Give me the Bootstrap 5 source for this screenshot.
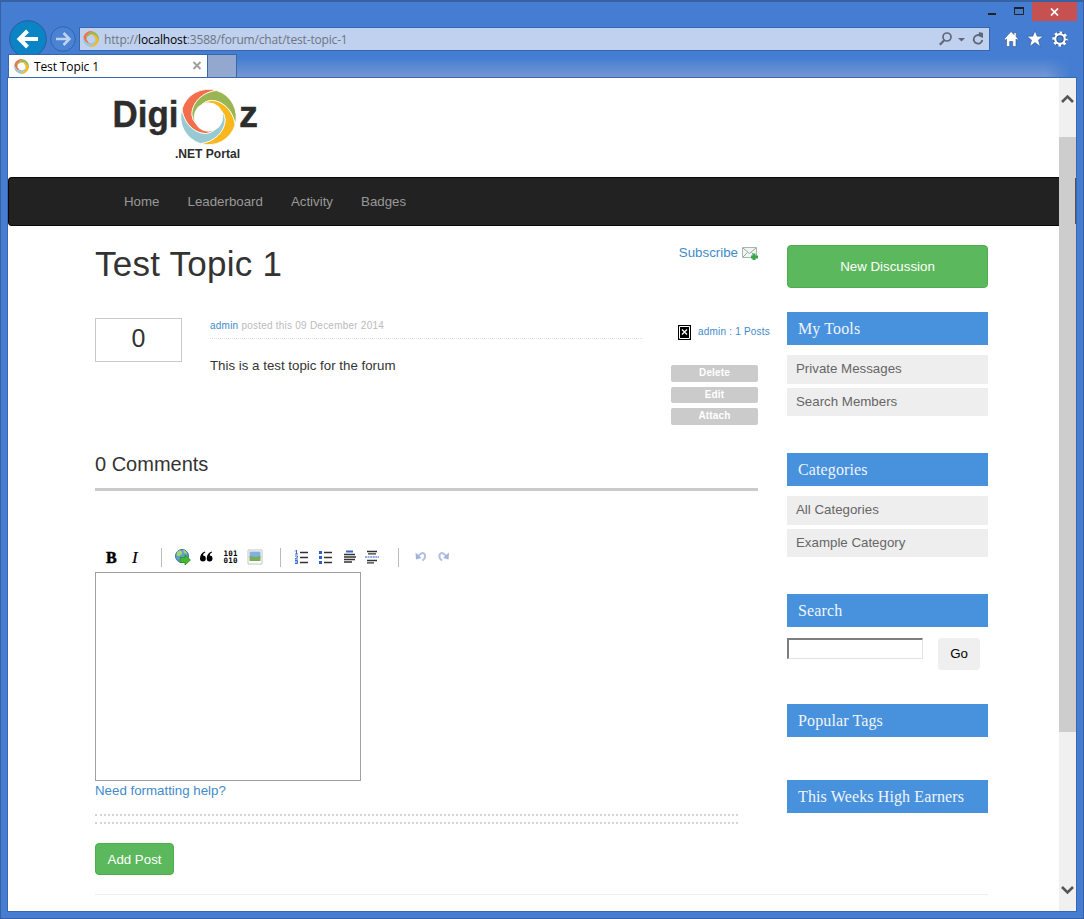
<!DOCTYPE html>
<html lang="en">
<head>
<meta charset="utf-8">
<title>Test Topic 1</title>
<meta name="viewport" content="width=device-width, initial-scale=1">
<link href="https://cdn.jsdelivr.net/npm/bootstrap@5.3.0/dist/css/bootstrap.min.css" rel="stylesheet">
<style>
  html, body { height: 100%; overflow: hidden; }
  body { font-family: "Liberation Sans", Arial, sans-serif; font-size: 13.3px; line-height: 20px; color: #333; }
  a { color: #428bca; text-decoration: none; }
  svg { display: block; flex: none; }
  .win { width: 1084px; height: 919px; background: #447dd1; border: 1px solid #3861a3; border-top-width: 2px; }
  .chrome { height: 75px; font-family: "Open Sans", "Noto Sans", sans-serif; color: #000; }
  .titlebar { height: 19px; padding-right: 6px; }
  .close-box { width: 45px; height: 19px; background: #c75050; margin-left: 1px; }
  .addr-row { height: 33px; padding: 2px 14px 0 8px; }
  .addr { width: 911px; height: 24px; background: #bfd1ee; border: 1px solid #3a66ad; font-size: 12px; color: #6d7683; }
  .addr .url { letter-spacing: -.17px; padding-top: 2px; }
  .addr b { font-weight: 400; color: #000; }
  .tab-row { height: 23px; position: relative; padding-left: 7px; z-index: 1; }
  .tab-row .haze { flex: 1; margin-right: 12px; background: linear-gradient(#447dd1 15%, #7597d3); -webkit-mask-image: linear-gradient(90deg, #000 97%, transparent); mask-image: linear-gradient(90deg, #000 97%, transparent); }
  .page-tab { width: 200px; background: #fff; border: 1px solid #3a66ad; border-bottom: 0; font-size: 12px; }
  .page-tab span { padding-top: 2px; letter-spacing: -.12px; }
  .new-tab { width: 29px; background: #92a8cf; border: 1px solid #3a66ad; border-left: 0; border-bottom: 0; }
  .client { height: 835px; margin: 0 6px; border: 1px solid #3a66ad; background: #fff; }
  .view { width: 1051px; }
  .scroller { width: 17px; background: #f0f0f0; }
  .scroller .arrow { height: 59px; padding-top: 16px; }
  .scroller .thumb { height: 595px; background: #cdcdcd; padding-top: 41px; }
  .scroller .thumb i { display: block; width: 1px; height: 46px; margin-left: 16px; background: #555; }
  .brand { height: 99px; padding-left: 82px; }
  .main-nav { height: 49px; background: #222; border: 1px solid #080808; border-right: 0; border-radius: 4px 0 0 4px; padding: 0 0 0 101px; }
  .main-nav .navbar-nav .nav-link { padding: 0 14px; color: #999; font-size: 13.3px; }
  .wrap { width: 893px; margin-left: 87px; height: 668px; }
  .left { width: 663px; }
  .side { width: 201px; padding-top: 19px; }
  .topic-head { height: 92px; }
  h1 { font-size: 35px; font-weight: 400; line-height: 40px; margin: 18px 0 0; letter-spacing: .25px; }
  .subs { margin-top: 17px; }
  .post { height: 126px; }
  .votes { width: 87px; height: 44px; border: 1px solid #c8c8c8; font-size: 25px; line-height: 39px; margin-right: 28px; }
  .body-col { width: 433px; margin-right: 28px; }
  .meta { height: 21px; font-size: 10px; line-height: 15px; color: #bbb; border-bottom: 1px dotted #ddd; letter-spacing: .23px; }
  .says { margin-top: 17px; letter-spacing: 0; }
  .who { height: 28px; margin: 0 -14px 0 7px; font-size: 10px; letter-spacing: .2px; }
  .who a { margin-left: 7px; }
  .tiny { display: block; width: 87px; height: 16.5px; margin-bottom: 5px; padding: 0; border: 0; border-radius: 2px; background: #cbcbcb; color: #fff; font-size: 10px; font-weight: 700; line-height: 16px; letter-spacing: .15px; }
  .comments { height: 47px; border-bottom: 3px solid #cbcbcb; font-size: 20px; line-height: 40px; font-weight: 400; margin: 0; letter-spacing: 0; }
  .tools { height: 24px; margin-top: 54px; padding-left: 4px; }
  .tools .sep { width: 1px; height: 19px; background: #bbb; }
  .editor { display: block; width: 266px; height: 209px; border: 1px solid #a0a0a0; margin-top: 3px; resize: none; }
  .dots { width: 643px; height: 10px; margin-top: 13px; border: dotted #d5d5d5; border-width: 2px 0; }
  .btn-go { background: #5cb85c; border: 1px solid #4cae4c; color: #fff; border-radius: 4px; font-size: 13.3px; padding: 0; }
  .add { width: 79px; height: 32px; margin-top: 19px; line-height: 29px; }
  .disc { width: 201px; height: 43px; padding-top: 1px; }
  .side h2 { height: 33px; margin: 0 0 10px; padding-left: 11px; background: #4891dd; color: #f0f5fc; font: 400 16px/33px "Liberation Serif", "Times New Roman", serif; letter-spacing: .12px; }
  .side .pick { height: 28.5px; margin-bottom: 4px; padding-left: 9px; background: #eee; color: #666; line-height: 28px; }
  .find { width: 136px; height: 21px; border: 2px solid; border-color: #7d7d7d #e3e3e3 #e3e3e3 #7d7d7d; border-right-width: 1px; border-bottom-width: 1px; background: #fff; }
  .go { width: 42px; height: 32px; margin-left: 15px; background: #efefef; border: 0; border-radius: 4px; padding: 0; color: #000; font-size: 13.3px; }
  .foot { width: 893px; margin-left: 87px; border-top: 1px solid #eee; }
</style>
</head>
<body>
<svg width="0" height="0" class="position-absolute" aria-hidden="true">
  <defs>
    <path id="petal" d="M8-26.500A27.600 27.600 0 0 0-26.500-8C-25 6-14 17-2 16.500Q3 16 6 13A14.400 14.400 0 0 1-13 6Q-16 3-16.500-2C-17-14-6-25 8-26.500Z"/>
    <g id="swirl">
      <use href="#petal" fill="#f36e4b"/>
      <use href="#petal" fill="#9ab652" transform="rotate(90)"/>
      <use href="#petal" fill="#f8b71c" transform="rotate(180)"/>
      <use href="#petal" fill="#97cad2" transform="rotate(270)"/>
    </g>
  </defs>
</svg>
<div class="win">
  <header class="chrome">
    <div class="titlebar d-flex justify-content-end">
      <svg width="50" height="19" viewBox="0 0 50 19"><path d="M7 11h8v2H7z" fill="#222"/><path d="M33.500 6h9v6.500h-9z" fill="none" stroke="#222"/><path d="M33 5h10v2H33z" fill="#222"/></svg>
      <div class="close-box d-flex align-items-center justify-content-center">
        <svg width="9" height="8" viewBox="0 0 9 8"><path d="M1 .5l7 7M8 .5l-7 7" stroke="#fff" stroke-width="1.700"/></svg>
      </div>
    </div>
    <div class="addr-row d-flex align-items-center">
      <svg width="38" height="38" viewBox="0 0 38 38"><circle cx="19" cy="19" r="18.300" fill="#0a84c4" stroke="#2c5c9c"/><path d="M29 19H11M18.500 11l-8 8 8 8" fill="none" stroke="#fff" stroke-width="4"/></svg>
      <svg style="margin:0 3px" width="26" height="26" viewBox="0 0 26 26"><circle cx="13" cy="13" r="12.300" fill="#4a82d4" stroke="#3564aa"/><path d="M6 13h13M13.500 7l6 6-6 6" fill="none" stroke="#c0d3ee" stroke-width="2.500"/></svg>
      <div class="addr d-flex align-items-center flex-shrink-0">
        <svg style="margin:0 5px 0 3px" width="16" height="16" viewBox="-28 -28 56 56"><use href="#swirl"/></svg>
        <span class="url flex-grow-1">http://<b>localhost</b>:3588/forum/chat/test-topic-1</span>
        <svg width="50" height="20" viewBox="0 0 50 20" fill="none" stroke="#5f6878"><circle cx="8" cy="8" r="4" stroke-width="1.700"/><path d="M5 11.500L.8 15.700" stroke-width="2.200"/><path d="M19 9h7l-3.500 3.500z" fill="#5f6878" stroke="none"/><path d="M41 6.500A4.300 4.300 0 1 0 43.300 11" stroke-width="1.800"/><path d="M40 3l4 1v5l-4.500-2z" fill="#5f6878" stroke="none"/></svg>
      </div>
      <svg style="margin-left:14px" width="66" height="18" viewBox="0 0 66 18"><g fill="#fff" stroke="#31588f" stroke-width=".6"><path d="M7 1.500L.2 9l1 1.200L2.500 9v7.500h3.200v-5h3v5H12V9l1.200 1.200 1-1.200-2-2.200V2.500H10v2z"/><path d="M31 .7l2.200 5.500h6L34.500 10l1.800 6.500-5.300-3.900-5.300 3.900L27.500 10l-4.700-3.800h6z"/></g><g transform="translate(56 9)"><circle r="4.800" fill="none" stroke="#31588f" stroke-width="4.200"/><circle r="6.500" fill="none" stroke="#fff" stroke-width="2.200" stroke-dasharray="2.600 2.505" stroke-dashoffset="1.300"/><circle r="4.800" fill="none" stroke="#fff" stroke-width="2.200"/></g></svg>
    </div>
    <div class="tab-row d-flex">
      <div class="page-tab d-flex align-items-center">
        <svg style="margin:0 5px" width="15" height="15" viewBox="-28 -28 56 56"><use href="#swirl"/></svg>
        <span class="flex-grow-1">Test Topic 1</span>
        <svg class="me-1" width="11" height="10" viewBox="0 0 11 10"><path d="M1.500 1l7 7M8.500 1l-7 7" stroke="#a0a0a0" stroke-width="2"/></svg>
      </div>
      <div class="new-tab"></div>
      <div class="haze"></div>
    </div>
  </header>
  <div class="client d-flex">
    <div class="view">
      <div class="brand">
        <svg width="200" height="90" viewBox="0 0 200 90" fill="#2d2d2d" font-family="Liberation Sans, Arial, sans-serif" font-weight="700">
          <text x="22.500" y="49" font-size="36" textLength="66" lengthAdjust="spacingAndGlyphs" stroke="#2d2d2d" stroke-width=".4">Digi</text>
          <text x="149" y="49" font-size="36" textLength="19" lengthAdjust="spacingAndGlyphs" stroke="#2d2d2d" stroke-width=".4">z</text>
          <text x="85" y="80" font-size="12" textLength="65" lengthAdjust="spacingAndGlyphs">.NET Portal</text>
          <use href="#swirl" transform="translate(118.500 39)" stroke="#fff" stroke-width=".8"/>
        </svg>
      </div>
      <nav class="main-nav navbar navbar-expand">
        <div class="navbar-nav">
          <a class="nav-link" href="#">Home</a>
          <a class="nav-link" href="#">Leaderboard</a>
          <a class="nav-link" href="#">Activity</a>
          <a class="nav-link" href="#">Badges</a>
        </div>
      </nav>
      <main class="wrap d-flex justify-content-between">
        <section class="left">
          <div class="topic-head d-flex justify-content-between align-items-start">
            <h1>Test Topic 1</h1>
            <a class="subs d-flex align-items-center" href="#">Subscribe
              <svg class="ms-1" width="16" height="14" viewBox="0 0 16 14"><path d="M.5 1.500h14v10H.5z" fill="#f0f5f3" stroke="#a9b5b2"/><path d="M1 2l6.500 5.500L14 2M1 11l4.500-4.500M14 11L9.500 6.500" fill="none" stroke="#9aa8a4"/><path d="M10.500 7.500h3v2H16v3h-2.500V14h-3v-1.500H9v-3h1.500z" fill="#3aa54a"/></svg>
            </a>
          </div>
          <article class="post d-flex align-items-start">
            <div class="votes text-center">0</div>
            <div class="body-col">
              <div class="meta"><a href="#">admin</a> posted this 09 December 2014</div>
              <div class="says">This is a test topic for the forum</div>
            </div>
            <div>
              <div class="who d-flex align-items-center text-nowrap">
                <svg width="13" height="15" viewBox="0 0 13 15"><path fill="#000" d="M0 0h13v15H0z"/><path d="M1.500 1.500h10v12h-10z" fill="none" stroke="#fff"/><path d="M4 4.500l5 5M9 4.500l-5 5" stroke="#fff" stroke-width="1.300"/></svg>
                <a href="#">admin : 1 Posts</a>
              </div>
              <div style="height:19px"></div>
              <button class="tiny">Delete</button>
              <button class="tiny">Edit</button>
              <button class="tiny">Attach</button>
            </div>
          </article>
          <h3 class="comments">0 Comments</h3>
          <div class="tools d-flex align-items-center">
            <svg width="24" height="20" viewBox="0 0 24 20"><text x="7" y="15.500" font-family="Liberation Serif, serif" font-weight="700" font-size="16" stroke="#000" stroke-width=".5">B</text></svg>
            <svg width="24" height="20" viewBox="0 0 24 20"><text x="9" y="15.500" font-family="Liberation Serif, serif" font-style="italic" font-size="17" stroke="#000" stroke-width=".2">I</text></svg>
            <span class="sep" style="margin:0 9px 0 14px"></span>
            <svg width="24" height="20" viewBox="0 0 24 20"><circle cx="11" cy="9" r="6.500" fill="#5e9ed0" stroke="#3f75a5"/><path d="M6 5c2-2 4-2 5 0s-2 4-4 4-1-2-1-4zM12 3c2 0 4 2 4 4l-3-1zM8 11l4-1 2 2-3 2z" fill="#a4d76a"/><path d="M9 10.500h5V8l5.500 5-5.500 5v-2.500H9z" fill="#45b832" stroke="#2b8d22" stroke-width=".8"/></svg>
            <svg width="24" height="20" viewBox="0 0 24 20"><g id="q"><path d="M10 4.500C7 5.500 5 8 5 11.500a2.900 2.900 0 1 0 3-2.900c0-1.300.8-2.500 2.300-3.200z"/></g><use href="#q" x="6.700"/></svg>
            <svg width="24" height="20" viewBox="0 0 24 20" font-family="DejaVu Sans Mono, monospace" font-size="7.500" font-weight="700"><text x="4.500" y="8.500" textLength="14">101</text><text x="4.500" y="15.500" textLength="14">010</text></svg>
            <svg width="24" height="20" viewBox="0 0 24 20"><path d="M5 3h14v14H5z" fill="#fff" stroke="#c4c4c4"/><path d="M6.500 4.500h11v6h-11z" fill="#83aee0"/><path d="M6.500 9l6 1 5-1v5h-11z" fill="#79ad55"/></svg>
            <span class="sep" style="margin:0 9px 0 13px"></span>
            <svg width="24" height="20" viewBox="0 0 24 20"><path d="M10 5.500h8M10 10.500h8M10 15.500h8" stroke="#333" stroke-width="1.300"/><path d="M6.500 3v4M5 4.500L6.500 3M5 7h3M5 9h2.500v1.300L5 12h3M5 13.500h2.500v3H5M5 15h2.500" fill="none" stroke="#3d6cd0"/></svg>
            <svg width="24" height="20" viewBox="0 0 24 20"><path d="M10 5.500h8M10 10.500h8M10 15.500h8" stroke="#333" stroke-width="1.300"/><path d="M5 4h3v3H5zM5 9h3v3H5zM5 14h3v3H5z" fill="#2d5fd0"/></svg>
            <svg width="24" height="20" viewBox="0 0 24 20"><path d="M8 4.500h7" stroke="#356bc4" stroke-width="2"/><path d="M6 7.500h11M6 10h12M6 12.500h11M6 15h8" stroke="#333" stroke-width="1.500"/></svg>
            <svg width="24" height="20" viewBox="0 0 24 20"><path d="M5 4.500h10M6 6.900h8M5 13.500h10M5 15.900h7" stroke="#333" stroke-width="1.400"/><path d="M3 10h14" stroke="#6594da" stroke-width="1.300" stroke-dasharray="2 .6"/></svg>
            <span class="sep" style="margin:0 10px 0 12px"></span>
            <svg width="24" height="20" viewBox="0 0 24 20" ><g id="undo"><path d="M8.500 10.500C11 6 15 4.500 16 8c.5 2.500-1 4.500-2.500 5.500" fill="none" stroke="#b3c1de" stroke-width="2"/><path d="M6.500 5.500l.5 7 5.500-1.500z" fill="#9fb5de"/></g></svg>
            <svg width="24" height="20" viewBox="0 0 24 20"><use href="#undo" transform="matrix(-1 0 0 1 22.500 0)"/></svg>
          </div>
          <textarea class="editor"></textarea>
          <a class="d-block" href="#">Need formatting help?</a>
          <div class="dots"></div>
          <button class="btn btn-go add">Add Post</button>
        </section>
        <aside class="side">
          <button class="btn btn-go disc">New Discussion</button>
          <h2 style="margin-top:24px">My Tools</h2>
          <div class="pick">Private Messages</div>
          <div class="pick">Search Members</div>
          <h2 style="margin-top:37px">Categories</h2>
          <div class="pick">All Categories</div>
          <div class="pick">Example Category</div>
          <h2 style="margin-top:37px">Search</h2>
          <div class="d-flex align-items-start" style="padding-top:1px">
            <input class="find" type="text" aria-label="Search">
            <button class="go">Go</button>
          </div>
          <h2 style="margin-top:34px">Popular Tags</h2>
          <h2 style="margin-top:43px">This Weeks High Earners</h2>
        </aside>
      </main>
      <div class="foot"></div>
    </div>
    <div class="scroller d-flex flex-column">
      <div class="arrow"><svg width="17" height="10" viewBox="0 0 17 10"><path d="M3 8l5.500-5.500L14 8" fill="none" stroke="#555" stroke-width="2.600"/></svg></div>
      <div class="thumb"><i></i></div>
      <svg class="mt-auto mb-3" width="17" height="10" viewBox="0 0 17 10"><path d="M3 2l5.500 5.500L14 2" fill="none" stroke="#555" stroke-width="2.600"/></svg>
    </div>
  </div>
</div>
<script src="https://cdn.jsdelivr.net/npm/bootstrap@5.3.0/dist/js/bootstrap.bundle.min.js"></script>
</body>
</html>
